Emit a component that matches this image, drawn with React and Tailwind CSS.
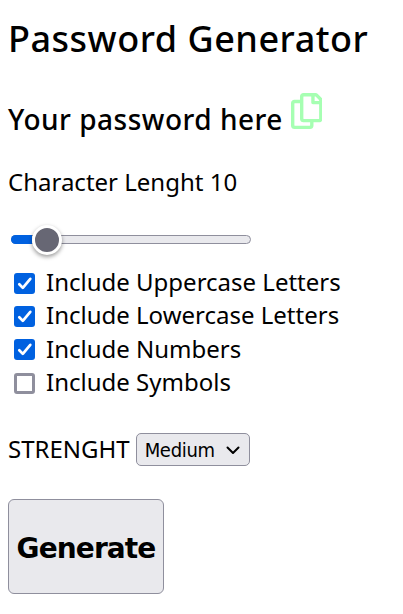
import React from "react";

const options = [
  { label: "Include Uppercase Letters", checked: true },
  { label: "Include Lowercase Letters", checked: true },
  { label: "Include Numbers", checked: true },
  { label: "Include Symbols", checked: false },
];

function CopyIcon() {
  return (
    <svg
      viewBox="0 0 448 512"
      className="ml-2 h-9 w-[31.5px] -translate-y-[9px] fill-[#a6ffb2]"
      aria-hidden="true"
    >
      <path d="M433.941 65.941l-51.882-51.882A48 48 0 0 0 348.118 0H176c-26.51 0-48 21.49-48 48v48H48c-26.51 0-48 21.49-48 48v320c0 26.51 21.49 48 48 48h224c26.51 0 48-21.49 48-48v-48h80c26.51 0 48-21.49 48-48V99.882a48 48 0 0 0-14.059-33.941zM266 464H54a6 6 0 0 1-6-6V150a6 6 0 0 1 6-6h74v224c0 26.51 21.49 48 48 48h96v42a6 6 0 0 1-6 6zm128-96H182a6 6 0 0 1-6-6V54a6 6 0 0 1 6-6h106v88c0 13.255 10.745 24 24 24h88v202a6 6 0 0 1-6 6zm6-256h-64V48h9.632c1.591 0 3.117.632 4.243 1.757l48.368 48.368a6 6 0 0 1 1.757 4.243V112z" />
    </svg>
  );
}

function Checkbox({ checked }) {
  if (!checked) {
    return <span className="mt-1 h-[21px] w-[21px] rounded-[3px] border-[3px] border-[#8f8f9d] bg-white" />;
  }
  return (
    <span className="mt-[3px] flex h-[21px] w-[21px] items-center justify-center rounded-[3px] bg-[#0061e0]">
      <svg viewBox="0 0 21 21" className="h-[21px] w-[21px]" fill="none" aria-hidden="true">
        <path d="M5.3 11.3l3.500 3.600 7.500-9" stroke="white" strokeWidth="2.7" strokeLinecap="round" strokeLinejoin="round" />
      </svg>
    </span>
  );
}

export default function App() {
  return (
    <main className="flex h-[614px] w-[403px] flex-col items-start overflow-hidden bg-white pl-2 font-['Noto_Sans',sans-serif] text-2xl leading-[33px] whitespace-nowrap text-black">
      <h1 className="mt-[14px] text-[36px] leading-[49px] font-medium tracking-[0.52px]">Password Generator</h1>
      <h2 className="mt-[37px] flex h-[39px] items-center text-[28px] leading-[39px] font-medium tracking-[0.5px]">
        Your password here
        <CopyIcon />
      </h2>
      <p className="mt-[26px]">Character Lenght 10</p>
      <div className="mt-[25px] ml-[3px] flex h-[33px] w-[240px] items-center">
        <div className="flex h-[9px] w-full items-center rounded-full border border-[#8f8f9d] bg-[#e9e9ed]">
          <div className="-ml-px h-[9px] w-[21px] shrink-0 rounded-l-full bg-[#0061e0]" />
          <div className="mt-px h-[30px] w-[30px] shrink-0 rounded-full border-[3px] border-white bg-[#676774] shadow-[0_2px_4px_rgba(0,0,0,0.4)]" />
        </div>
      </div>
      <div className="mt-[9px] ml-[6px] flex flex-col">
        {options.map((option) => (
          <label key={option.label} className="flex h-[33.33px] items-center gap-[11px]">
            <Checkbox checked={option.checked} />
            {option.label}
          </label>
        ))}
      </div>
      <div className="mt-[34px] flex h-[34px] items-end gap-[6px]">
        <span className="mb-px">STRENGHT</span>
        <button className="flex h-[33px] w-[114px] items-center justify-between rounded-[5px] border border-[#8f8f9d] bg-[#e9e9ed] pr-[9px] pl-2 pt-px font-['DejaVu_Sans_Condensed','DejaVu_Sans',sans-serif] text-[20px] tracking-[-0.3px] [font-stretch:75%]">
          Medium
          <svg viewBox="0 0 14 9" className="h-[9px] w-[14px]" fill="none" aria-hidden="true">
            <path d="M1.5 1.5L7 7l5.500-5.500" stroke="black" strokeWidth="2" strokeLinecap="round" strokeLinejoin="round" />
          </svg>
        </button>
      </div>
      <button className="mt-[33px] flex h-[95px] w-[156px] items-center justify-center rounded-[6px] border border-[#8f8f9d] bg-[#e9e9ed] pt-1 font-['DejaVu_Sans',sans-serif] text-[28px] font-bold tracking-[-0.9px]">
        Generate
      </button>
    </main>
  );
}
